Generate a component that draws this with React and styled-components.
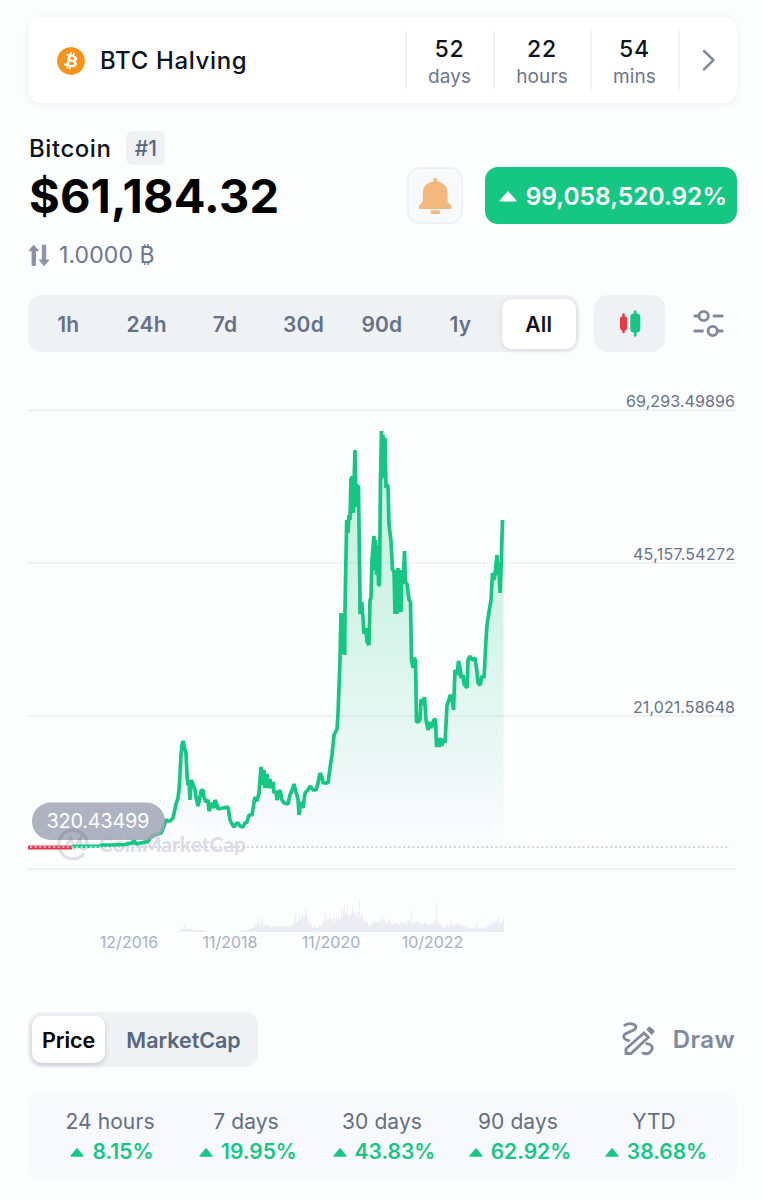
import React from "react";
import styled, { createGlobalStyle } from "styled-components";
import { SiBitcoin } from "react-icons/si";

const GlobalStyle = createGlobalStyle`
  * { box-sizing: border-box; }
  body {
    margin: 0;
    background: #fcfdfd;
    font-family: Inter, "Liberation Sans", sans-serif;
    color: #0d1421;
  }
  button { font: inherit; border: 0; background: none; padding: 0; color: inherit; }
`;

const Page = styled.main`
  width: 765px;
  height: 1200px;
  padding: 17px 28px 0;
  overflow: hidden;
`;

const HalvingCard = styled.section`
  display: flex;
  align-items: center;
  height: 86px;
  padding: 0 0 0 29px;
  border-radius: 13px;
  background: #fff;
  box-shadow: 0 1px 6px rgba(88, 102, 126, 0.1);
`;

const CoinIcon = styled(SiBitcoin)`
  width: 28px;
  height: 28px;
  margin-top: 1px;
  border-radius: 50%;
  background: radial-gradient(#fff 60%, transparent 62%);
  color: #f7931a;
`;

const HalvingTitle = styled.h2`
  flex: 1;
  margin: 1px 0 0 15px;
  font-size: 24px;
  font-weight: 500;
  letter-spacing: 0.65px;
`;

const TimeCell = styled.div`
  display: flex;
  flex-direction: column;
  align-items: center;
  width: ${(p) => p.$width}px;
  height: 58px;
  padding-right: 1px;
  border-left: 2px solid #f0f1f5;
`;

const TimeValue = styled.span`
  font-size: 23px;
  font-weight: 500;
  line-height: 28px;
  margin-top: 4px;
  letter-spacing: 0.9px;
`;

const TimeUnit = styled.span`
  font-size: 19px;
  line-height: 28px;
  color: #6b7690;
  letter-spacing: 0.1px;
`;

const NextCell = styled.button`
  display: flex;
  align-items: center;
  width: 59px;
  height: 58px;
  padding-left: 21px;
  border-left: 2px solid #f0f1f5;
`;

const Header = styled.header`
  display: flex;
  justify-content: space-between;
  height: 164px;
  margin-top: 28px;
`;

const Summary = styled.div`
  display: flex;
  flex-direction: column;
`;

const NameRow = styled.div`
  display: flex;
  align-items: center;
  gap: 15px;
  height: 34px;
  padding-left: 1px;
`;

const Name = styled.h1`
  margin: 0;
  font-size: 24px;
  font-weight: 500;
  letter-spacing: 0.55px;
`;

const Rank = styled.span`
  width: 39px;
  height: 34px;
  border-radius: 7px;
  background: #eff2f5;
  color: #58667e;
  font-size: 21px;
  font-weight: 500;
  line-height: 35px;
  text-align: center;
`;

const Price = styled.div`
  height: 62px;
  padding-left: 1px;
  font-size: 47px;
  font-weight: 700;
  line-height: 62px;
  letter-spacing: 0.15px;
  color: #000;
`;

const Conversion = styled.div`
  display: flex;
  align-items: center;
  gap: 9px;
  height: 56px;
  color: #6b7690;
  font-size: 23px;
  letter-spacing: 0.1px;
`;

const Actions = styled.div`
  display: flex;
  gap: 22px;
  margin-top: 36px;
`;

const BellButton = styled.button`
  display: grid;
  place-items: center;
  width: 56px;
  height: 57px;
  border: 2px solid #eff0f6;
  border-radius: 13px;
  background: #f8f9fd;
`;

const ChangeBadge = styled.div`
  display: flex;
  align-items: center;
  justify-content: flex-end;
  gap: 9px;
  width: 252px;
  height: 57px;
  padding: 1px 10px 0 0;
  border-radius: 13px;
  background: #16c784;
  color: #fff;
  font-size: 24.5px;
  font-weight: 600;
  white-space: nowrap;
`;

const Controls = styled.div`
  display: flex;
  align-items: center;
  height: 57px;
`;

const RangeTabs = styled.div`
  display: grid;
  grid-template-columns: repeat(7, 1fr);
  width: 551px;
  height: 57px;
  padding: 0 1px;
  border-radius: 14px;
  background: #eff2f5;
`;

const RangeTab = styled.button`
  margin: 4px 2px 3px 2px;
  padding-top: 1px;
  border-radius: 10px;
  font-size: 21px;
  font-weight: 600;
  letter-spacing: 0.2px;
  color: ${(p) => (p.$active ? "#0d1421" : "#667189")};
  background: ${(p) => (p.$active ? "#fff" : "transparent")};
  box-shadow: ${(p) => (p.$active ? "0 1px 5px rgba(128, 138, 157, 0.25)" : "none")};
`;

const CandleButton = styled.button`
  display: grid;
  place-items: center;
  width: 71px;
  height: 57px;
  margin-left: 15px;
  border-radius: 14px;
  background: #eff2f5;
`;

const SettingsButton = styled.button`
  display: flex;
  margin-left: 27.5px;
`;

const ChartArea = styled.div`
  height: 660px;
`;

const ChartSvg = styled.svg`
  display: block;
  overflow: visible;
`;

const AxisLabel = styled.text`
  font-size: 16px;
  fill: ${(p) => (p.$muted ? "#a6b0c3" : "#667189")};
`;

const Watermark = styled.text`
  font-family: Lato, Inter, sans-serif;
  font-size: 20px;
  font-weight: 900;
  fill: #dcdee8;
`;

const TagText = styled.text`
  font-size: 20px;
  fill: #fff;
`;

const ModeRow = styled.div`
  display: flex;
  align-items: center;
  justify-content: space-between;
  height: 55px;
`;

const ModeSwitch = styled.div`
  display: flex;
  width: 230px;
  height: 55px;
  padding: 4px 0 4px 4px;
  border-radius: 13px;
  background: #eff2f5;
`;

const Mode = styled.button`
  flex: none;
  width: ${(p) => p.$width}px;
  border-radius: 10px;
  font-size: 21.5px;
  font-weight: 600;
  letter-spacing: -0.05px;
  color: ${(p) => (p.$active ? "#000" : "#58667e")};
  background: ${(p) => (p.$active ? "#fff" : "transparent")};
  box-shadow: ${(p) => (p.$active ? "0 2px 5px rgba(88, 102, 126, 0.3)" : "none")};
`;

const DrawButton = styled.button`
  display: flex;
  align-items: center;
  gap: 17px;
  margin-right: 2px;
  color: #808a9d;
  font-size: 24px;
  font-weight: 600;
  letter-spacing: 0.4px;
`;

const StatsCard = styled.section`
  display: grid;
  grid-template-columns: repeat(5, 136px);
  height: 86px;
  margin-top: 26px;
  padding: 14px 0 0 14px;
  border-radius: 14px;
  background: #f8f9fd;
`;

const Stat = styled.div`
  display: flex;
  flex-direction: column;
  align-items: center;
`;

const StatLabel = styled.span`
  height: 29px;
  font-size: 21px;
  line-height: 29px;
  color: #616e85;
  letter-spacing: 0.1px;
`;

const StatValue = styled.span`
  display: flex;
  align-items: center;
  gap: 8px;
  height: 32px;
  margin-left: 4px;
  font-size: 21px;
  font-weight: 600;
  line-height: 32px;
  color: #16c784;
`;

const UpArrow = ({ w, h }) => (
  <svg width={w} height={h} viewBox="0 0 16 10" preserveAspectRatio="none">
    <path d="M8 0.8 15 9H1Z" fill="currentColor" stroke="currentColor" strokeWidth="1.2" strokeLinejoin="round" />
  </svg>
);

const Bell = () => (
  <svg width="34" height="38" viewBox="0 0 34 38" fill="#f4b77c">
    <path d="M15.3 4.6V3a1.9 1.9 0 0 1 3.800 0v1.600C25.200 5.400 29.600 9.800 29.600 16v8.800l3.100 3.100c.5.5.7 1 .7 1.700v1.300c0 .6-.4 1-1 1H2c-.6 0-1-.4-1-1v-1.300c0-.7.2-1.200.7-1.700l3.100-3.100V16c0-6.200 4.400-10.600 10.500-11.400Z" />
    <rect x="12.600" y="33.300" width="9.400" height="3.600" rx="1.500" />
  </svg>
);

const Swap = () => (
  <svg width="22" height="23" viewBox="0 0 22 23" fill="#8a91a8">
    <path d="M5.800 1.200 10.600 6.700H7.500V21.500H4V6.700H1Z" stroke="#8a91a8" strokeWidth="0.900" strokeLinejoin="round" />
    <path d="M14.300 1.200H17.800V16H21L16.100 21.700 11.400 16H14.300Z" stroke="#8a91a8" strokeWidth="0.900" strokeLinejoin="round" />
  </svg>
);

const Chevron = () => (
  <svg width="16" height="24" viewBox="0 0 16 24" fill="none" stroke="#808a9d" strokeWidth="2.500" strokeLinecap="round" strokeLinejoin="round">
    <path d="M3 3 12.500 12.200 3 21.400" />
  </svg>
);

const Candles = () => (
  <svg width="22" height="27" viewBox="0 0 22 27">
    <path d="M4.500 4.500V22" stroke="#ea3943" strokeWidth="2.400" strokeLinecap="round" />
    <rect x="1" y="6.200" width="7" height="14.400" rx="2.800" fill="#ea3943" />
    <path d="M16.200 1.500V25.500" stroke="#16c784" strokeWidth="2.600" strokeLinecap="round" />
    <rect x="11.300" y="3.400" width="10" height="19.200" rx="3.600" fill="#16c784" />
  </svg>
);

const Sliders = () => (
  <svg width="31" height="29" viewBox="0 0 31 29" fill="none" stroke="#808a9d" strokeWidth="2.900" strokeLinecap="round">
    <path d="M1.800 7H5.500M21 7H29.200M1.800 22H9.500M25.500 22H29.200" />
    <circle cx="10.700" cy="7" r="4.600" />
    <circle cx="19.700" cy="22" r="4.600" />
  </svg>
);

const DrawIcon = () => (
  <svg width="34" height="35" viewBox="0 0 34 35" fill="none" stroke="#808a9d" strokeWidth="2.800" strokeLinecap="round">
    <path d="M2.800 3.200C5.400 1.800 8.800 1.300 11.500 2.300C14.800 3.600 14.500 6.800 11.300 8.200L4.500 11.200C.3 13.200.8 17.500 6.800 18.600" />
    <path d="M4 31.500V26.800L22 11L26.400 15.300L9 31.500Z" />
    <path d="M26.400 5.300a1.800 1.800 0 0 1 2.500 0l3 3a1.800 1.800 0 0 1 0 2.500l-2.200 2.200-5.500-5.500Z" fill="#808a9d" stroke="none" />
    <path d="M24.800 21.700C29.500 22.200 31.500 25 29.400 28.400C27.600 31.200 24.200 32.300 21 31.100" />
  </svg>
);

const EARLY = "72,846.500 100,846 103,845 113,845 125,844.500 132,843 134,840.500 136,844 148,841.500 150,838 153,835 158,834 161,833 164,826 166,820 168,821 170,821 173,818 176,804 178,798 179,790 180,775 181,755 182,745 183,741 185,750 186,753 187,775 188,785 189,782 190,800 191,780 193,784 195,790 196,797 198,806 200,797 201,791 203,790 204,797 206,802 208,800 209,811 212,803 214,808 215,800 217,805 218,809 223,808 228,807 230,820 232,824 234,827 236,824 238,823 240,826 243,827 245,823 247,822 249,815 252,815 254,803 255,797 257,801 259,793 261,767 263,785 264,770 265,788 267,774 268,788 270,779 271,788 273,782 274,793 276,791 277,800 280,790 282,800 284,803 288,804 290,795 292,790 294,784 296,792 298,799 299,815 301,802 303,808 305,793 308,790 310,786 313,790 316,790 318,783 320,773 322,777 323,783 328,783 330,768 332,755 334,735 337,729";
const LATE = "338,714 340,660 341,613 342.500,654 343.500,615 344.700,655 345,610 346.700,520 348,533 349,515 350,520 351,478 351.500,513 352,476 353.500,513 354,485 355,450 356,507 357,485 358.500,487 360,600 360,614 361.700,602 363,618 364,634 366,628 367,642 369,645 370,600 371,598 372,560 374,536 374.500,570 375.500,540 376.500,575 377.500,545 378.500,585 379.500,585 380.500,480 381.500,431 382,476 383,435 384,478 385,438 386,488 387,485 388,486 389,525 391,541 392.500,570 394,571 395,614 396,570 397,614 398,568 399,612 400,570 401,612 401.500,574 403,584 404.500,551 405.500,582 407,584 409,600 410.500,602 411.500,660 413,668 414,658 415.500,660 416.500,722 418,722 420,720 421,699 423,705 424.500,697 426,720 428,730 430,722 431,728 434,720 435.500,719 436.500,747 438,740 439,747 440,738 442,746 443,739 445,743 447,705 449,700 450,695 452,698 453.500,710 455,670 457,675 458.500,661 460,667 461,678 463,675 464,684 467,688 468,660 470,656 472,660 475,658 477,672 478,683 480,685 482,676 484,678 486,640 487,625 489,612 491,600 492.500,573 494,580 495.500,570 497,555 498,575 499,570 500,593 501,570 502.500,520";
const LINE = `${EARLY} ${LATE}`;

const VOLUME_LEVELS = [
  [179, 2], [184, 5], [190, 3], [205, 1.5], [209, 0], [236, 0], [244, 2], [252, 5], [258, 9], [263, 8],
  [272, 6], [282, 6], [290, 7], [296, 14], [306, 18], [312, 5], [318, 5], [324, 13], [334, 13],
  [342, 20], [350, 21], [360, 19], [368, 8], [376, 11], [384, 12], [396, 9], [410, 11], [424, 9],
  [436, 13], [442, 6], [454, 9], [466, 5], [482, 4], [490, 9], [504, 11],
];
const VOLUME_SPIKES = { 184: 7, 258: 13, 262: 14, 295: 18, 305: 23, 325: 19, 329: 18, 341: 24, 344: 28, 347: 26, 352: 26, 359: 33, 382: 17, 411: 22, 436: 29, 450: 12, 476: 10, 498: 14, 503: 14 };

const volumePath = () => {
  let d = "";
  for (let x = 179; x < 504; x += 1) {
    const i = VOLUME_LEVELS.findIndex(([px]) => px > x);
    const [x0, h0] = VOLUME_LEVELS[i - 1];
    const [x1, h1] = VOLUME_LEVELS[i];
    const base = h0 + ((h1 - h0) * (x - x0)) / (x1 - x0);
    const wobble = Math.abs(Math.sin(x * 12.9898) * 43758.5453) % 1;
    const h = VOLUME_SPIKES[x] || base * (0.65 + wobble * 0.5);
    d += `M${x} 932V${(932 - h).toFixed(1)}h1V932Z`;
  }
  return d;
};

const GRID = [
  { y: 410, label: "69,293.49896", ly: 407 },
  { y: 563, label: "45,157.54272", ly: 560 },
  { y: 716, label: "21,021.58648", ly: 713 },
  { y: 869 },
];

const DATES = [
  { x: 129, text: "12/2016" },
  { x: 230, text: "11/2018" },
  { x: 331, text: "11/2020" },
  { x: 432.5, text: "10/2022" },
];

const BrandMark = ({ color }) => (
  <path
    d="M83.500 854.200A14.300 14.300 0 1 1 87.300 844.500C87.300 850 80.500 850.500 80.500 845V838.500L74 848L70.500 838.500L65 849"
    fill="none"
    stroke={color}
    strokeWidth="3"
    strokeLinecap="round"
  />
);

const PriceChart = () => (
  <ChartSvg width="709" height="660" viewBox="28 352 709 660">
    <defs>
      <linearGradient id="fade" x1="0" y1="431" x2="0" y2="847" gradientUnits="userSpaceOnUse">
        <stop offset="0" stopColor="#16c784" stopOpacity="0.260" />
        <stop offset="0.500" stopColor="#16c784" stopOpacity="0.160" />
        <stop offset="0.820" stopColor="#30c09a" stopOpacity="0.070" />
        <stop offset="0.940" stopColor="#7fa8e8" stopOpacity="0.030" />
        <stop offset="1" stopColor="#8fb8e8" stopOpacity="0" />
      </linearGradient>
      <clipPath id="tag">
        <rect x="32" y="802.500" width="133" height="37.500" rx="18.700" />
      </clipPath>
    </defs>
    {GRID.map((g) => (
      <path key={g.y} d={`M28 ${g.y}H736`} stroke="#eff1f5" strokeWidth="2" />
    ))}
    <BrandMark color="#dcdee8" />
    <Watermark x="99" y="851.500" textLength="147" lengthAdjust="spacingAndGlyphs">CoinMarketCap</Watermark>
    <polygon points={`72,847 ${LINE} 503.500,520 503.500,847`} fill="url(#fade)" />
    <path d="M72 847H730" stroke="#d3d6e0" strokeWidth="1.800" strokeDasharray="2.200 2.400" />
    <polyline points={LINE} fill="none" stroke="#16c784" strokeWidth="3.700" strokeLinejoin="bevel" />
    <path d="M28 847.500H72" stroke="#dc3b50" strokeWidth="4" />
    <path d="M30 847H104" stroke="#fff" strokeOpacity="0.750" strokeWidth="1.500" strokeDasharray="2.200 2.400" />
    <rect x="32" y="802.500" width="133" height="37.500" rx="18.700" fill="#a1a7b7" fillOpacity="0.860" />
    <g clipPath="url(#tag)">
      <BrandMark color="#9a9fb1" />
    </g>
    <TagText x="98" y="828" textAnchor="middle" textLength="103">320.43499</TagText>
    {GRID.filter((g) => g.label).map((g) => (
      <AxisLabel key={g.label} x="735" y={g.ly} textAnchor="end" textLength={g.y < 500 ? 109 : 102}>
        {g.label}
      </AxisLabel>
    ))}
    <path d={volumePath()} fill="#ececf4" />
    {DATES.map((t) => (
      <AxisLabel key={t.text} $muted x={t.x} y="948" textAnchor="middle">
        {t.text}
      </AxisLabel>
    ))}
  </ChartSvg>
);

const RANGES = ["1h", "24h", "7d", "30d", "90d", "1y", "All"];
const COUNTDOWN = [
  ["52", "days", 88],
  ["22", "hours", 97],
  ["54", "mins", 88],
];
const STATS = [
  ["24 hours", "8.15%"],
  ["7 days", "19.95%"],
  ["30 days", "43.83%"],
  ["90 days", "62.92%"],
  ["YTD", "38.68%"],
];

export default function App() {
  return (
    <Page>
      <GlobalStyle />
      <HalvingCard>
        <CoinIcon />
        <HalvingTitle>BTC Halving</HalvingTitle>
        {COUNTDOWN.map(([value, unit, width]) => (
          <TimeCell key={unit} $width={width}>
            <TimeValue>{value}</TimeValue>
            <TimeUnit>{unit}</TimeUnit>
          </TimeCell>
        ))}
        <NextCell><Chevron /></NextCell>
      </HalvingCard>
      <Header>
        <Summary>
          <NameRow>
            <Name>Bitcoin</Name>
            <Rank>#1</Rank>
          </NameRow>
          <Price>$61,184.32</Price>
          <Conversion><Swap />1.0000 ₿</Conversion>
        </Summary>
        <Actions>
          <BellButton><Bell /></BellButton>
          <ChangeBadge><UpArrow w={18} h={11} />99,058,520.92%</ChangeBadge>
        </Actions>
      </Header>
      <Controls>
        <RangeTabs>
          {RANGES.map((r) => (
            <RangeTab key={r} $active={r === "All"}>{r}</RangeTab>
          ))}
        </RangeTabs>
        <CandleButton><Candles /></CandleButton>
        <SettingsButton><Sliders /></SettingsButton>
      </Controls>
      <ChartArea><PriceChart /></ChartArea>
      <ModeRow>
        <ModeSwitch>
          <Mode $active $width={73}>Price</Mode>
          <Mode $width={157}>MarketCap</Mode>
        </ModeSwitch>
        <DrawButton><DrawIcon />Draw</DrawButton>
      </ModeRow>
      <StatsCard>
        {STATS.map(([label, value]) => (
          <Stat key={label}>
            <StatLabel>{label}</StatLabel>
            <StatValue><UpArrow w={14} h={9} />{value}</StatValue>
          </Stat>
        ))}
      </StatsCard>
    </Page>
  );
}
